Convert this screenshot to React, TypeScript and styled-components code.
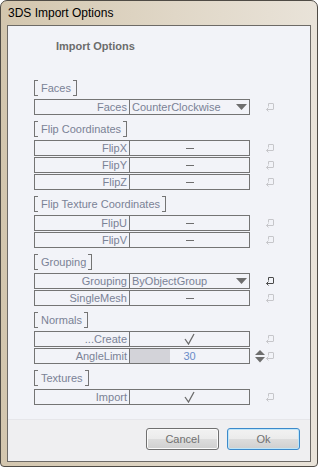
import * as React from "react";
import styled, { createGlobalStyle, css } from "styled-components";

const GlobalStyle = createGlobalStyle`
  html, body {
    margin: 0;
    padding: 0;
  }
  body {
    width: 318px;
    height: 467px;
    overflow: hidden;
    font-family: "Liberation Sans", Arial, sans-serif;
  }
`;

const lineColor = "#747474";
const textColor = "#7a8296";

const Window = styled.div`
  width: 318px;
  height: 467px;
  box-sizing: border-box;
  border: 1px solid #4f4b45;
  border-radius: 7px 7px 4px 4px;
  background: linear-gradient(90deg, #d3c6ae 0%, #e0d7c7 55%, #e9e3d9 100%);
  display: flex;
  flex-direction: column;
  overflow: hidden;
`;

const TitleBar = styled.div`
  height: 24px;
  line-height: 24px;
  padding-left: 7px;
  font-size: 12px;
  color: #000;
  flex: none;
`;

const Client = styled.div`
  flex: 1;
  margin: 0 6px 4px 6px;
  border: 1px solid #6d6a66;
  background: #f2f3f8;
  display: flex;
  flex-direction: column;
`;

const Content = styled.div`
  flex: 1;
  padding: 14px 0 0 26px;
`;

const Heading = styled.div`
  padding-left: 22px;
  font-size: 11px;
  line-height: 13px;
  font-weight: bold;
  color: #6c6c6c;
`;

const Groups = styled.div`
  margin-top: 27px;
  display: flex;
  flex-direction: column;
  gap: 6px;
`;

const GroupLabel = styled.div`
  display: flex;
  height: 16px;
  font-size: 11px;
  line-height: 16px;
  color: ${textColor};
`;

const Bracket = styled.span<{ side: "left" | "right" }>`
  width: 4px;
  box-sizing: border-box;
  border: 1px solid ${lineColor};
  ${(p) =>
    p.side === "left"
      ? css`
          border-right: none;
        `
      : css`
          border-left: none;
        `}
`;

const GroupText = styled.span`
  padding: 0 2px 0 3px;
`;

const Rows = styled.div`
  margin-top: 3px;
  display: flex;
  flex-direction: column;
  gap: 1px;
`;

const RowLine = styled.div`
  display: flex;
  align-items: center;
  height: 16px;
`;

const Row = styled.div`
  width: 216px;
  height: 16px;
  box-sizing: border-box;
  border: 1px solid ${lineColor};
  display: flex;
  font-size: 11px;
  line-height: 14px;
`;

const LabelCell = styled.div`
  width: 95px;
  box-sizing: border-box;
  border-right: 1px solid ${lineColor};
  padding-right: 2px;
  text-align: right;
  color: ${textColor};
  white-space: nowrap;
`;

const ValueCell = styled.div<{ centered?: boolean }>`
  flex: 1;
  position: relative;
  display: flex;
  align-items: center;
  justify-content: ${(p) => (p.centered ? "center" : "space-between")};
  padding: 0 2px;
  color: ${textColor};
  white-space: nowrap;
`;

const Fill = styled.div`
  position: absolute;
  left: 0;
  top: 0;
  bottom: 0;
  background: #d3d3d9;
`;

const Number = styled.span`
  position: relative;
  color: #6a8bc8;
`;

const Dash = styled.span`
  width: 8px;
  height: 1px;
  background: #6e6e6e;
`;

const Side = styled.div`
  width: 15px;
  display: flex;
  justify-content: flex-end;
`;

const Footer = styled.div`
  height: 42px;
  box-sizing: border-box;
  flex: none;
  border-top: 1px solid #e6e6ea;
  background: #efeff1;
  display: flex;
  justify-content: flex-end;
  align-items: flex-start;
  gap: 8px;
  padding: 8px 10px 0 0;
`;

const Button = styled.button<{ primary?: boolean }>`
  width: 73px;
  height: 22px;
  box-sizing: border-box;
  border: 1px solid ${(p) => (p.primary ? "#3c8acb" : "#707070")};
  border-radius: 3px;
  background: linear-gradient(#f2f2f2 0%, #ebebeb 50%, #dddddd 50%, #cfcfcf 100%);
  box-shadow: inset 0 0 0 1px ${(p) => (p.primary ? "#bfe6f9" : "#fbfbfb")};
  font-family: "Liberation Sans", Arial, sans-serif;
  font-size: 11px;
  color: #707070;
  padding: 0;
`;

const ResetIcon = ({ active }: { active?: boolean }) => (
  <svg width="10" height="10" viewBox="0 0 10 10" fill="none">
    <path
      d="M3.5 1.5 H8 Q8.5 1.5 8.5 2 V7 Q8.5 7.5 8 7.5 H1.5 M3.5 1.5 V4.5 M3.5 5.5 L1.5 7.5 L3.5 9.5"
      stroke={active ? "#4a4a4a" : "#c6c6ca"}
      strokeWidth="1"
    />
  </svg>
);

const DropArrow = () => (
  <svg width="11" height="6" viewBox="0 0 11 6">
    <polygon points="0,0 11,0 5.5,6" fill="#6e6e6e" />
  </svg>
);

const Check = () => (
  <svg width="11" height="12" viewBox="0 0 11 12" fill="none">
    <polyline points="1,6 4.5,11 10,1" stroke="#6a6a6a" strokeWidth="1.3" />
  </svg>
);

const Spinner = () => (
  <svg width="10" height="13" viewBox="0 0 10 13">
    <polygon points="5,0 10,5 0,5" fill="#6e6e6e" />
    <polygon points="0,7 10,7 5,12.5" fill="#6e6e6e" />
  </svg>
);

type Value =
  | { kind: "dropdown"; text: string }
  | { kind: "dash" }
  | { kind: "check" }
  | { kind: "number"; value: number; max: number };

type Item = { label: string; value: Value; reset?: boolean };
type Group = { title: string; items: Item[] };

const groups: Group[] = [
  {
    title: "Faces",
    items: [{ label: "Faces", value: { kind: "dropdown", text: "CounterClockwise" } }],
  },
  {
    title: "Flip Coordinates",
    items: [
      { label: "FlipX", value: { kind: "dash" } },
      { label: "FlipY", value: { kind: "dash" } },
      { label: "FlipZ", value: { kind: "dash" } },
    ],
  },
  {
    title: "Flip Texture Coordinates",
    items: [
      { label: "FlipU", value: { kind: "dash" } },
      { label: "FlipV", value: { kind: "dash" } },
    ],
  },
  {
    title: "Grouping",
    items: [
      { label: "Grouping", value: { kind: "dropdown", text: "ByObjectGroup" }, reset: true },
      { label: "SingleMesh", value: { kind: "dash" } },
    ],
  },
  {
    title: "Normals",
    items: [
      { label: "...Create", value: { kind: "check" } },
      { label: "AngleLimit", value: { kind: "number", value: 30, max: 90 } },
    ],
  },
  {
    title: "Textures",
    items: [{ label: "Import", value: { kind: "check" } }],
  },
];

function renderValue(v: Value) {
  switch (v.kind) {
    case "dropdown":
      return (
        <ValueCell>
          <span>{v.text}</span>
          <DropArrow />
        </ValueCell>
      );
    case "dash":
      return (
        <ValueCell centered>
          <Dash />
        </ValueCell>
      );
    case "check":
      return (
        <ValueCell centered>
          <Check />
        </ValueCell>
      );
    case "number":
      return (
        <ValueCell centered>
          <Fill style={{ width: `${(v.value / v.max) * 100}%` }} />
          <Number>{v.value}</Number>
        </ValueCell>
      );
  }
}

export default function App() {
  return (
    <>
      <GlobalStyle />
      <Window>
        <TitleBar>3DS Import Options</TitleBar>
        <Client>
          <Content>
            <Heading>Import Options</Heading>
            <Groups>
              {groups.map((g) => (
                <div key={g.title}>
                  <GroupLabel>
                    <Bracket side="left" />
                    <GroupText>{g.title}</GroupText>
                    <Bracket side="right" />
                  </GroupLabel>
                  <Rows>
                    {g.items.map((it) => (
                      <RowLine key={it.label}>
                        <Row>
                          <LabelCell>{it.label}</LabelCell>
                          {renderValue(it.value)}
                        </Row>
                        <Side>{it.value.kind === "number" && <Spinner />}</Side>
                        <ResetIcon active={it.reset} />
                      </RowLine>
                    ))}
                  </Rows>
                </div>
              ))}
            </Groups>
          </Content>
          <Footer>
            <Button>Cancel</Button>
            <Button primary>Ok</Button>
          </Footer>
        </Client>
      </Window>
    </>
  );
}
